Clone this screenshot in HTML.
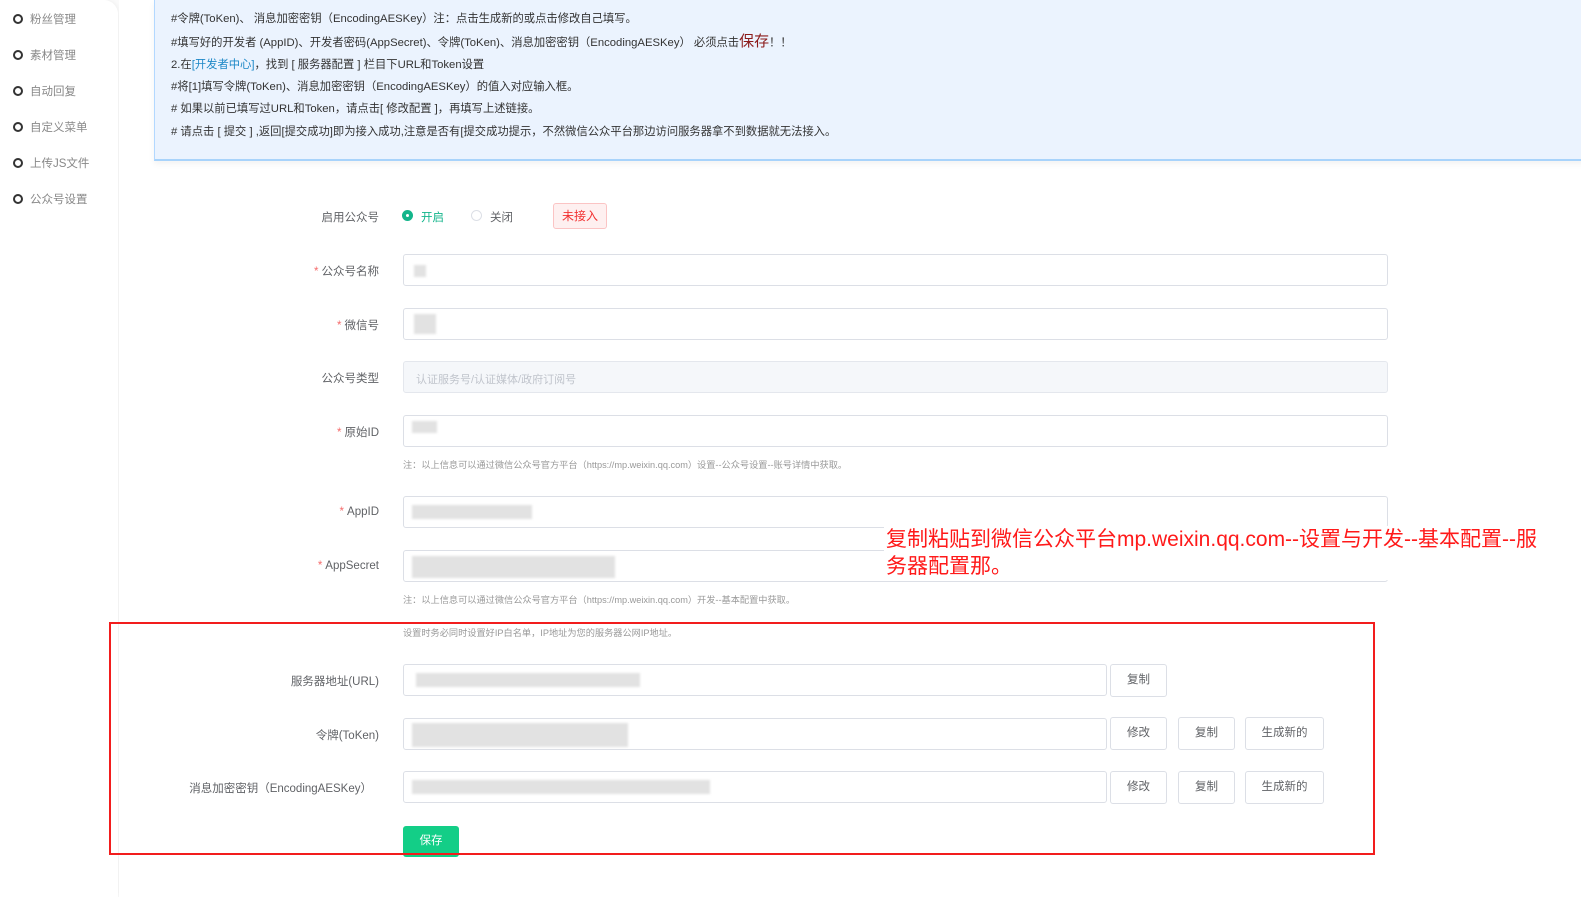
<!DOCTYPE html>
<html><head><meta charset="utf-8"><style>
*{margin:0;padding:0;box-sizing:border-box}
body{width:1581px;height:897px;background:#fafafa;font-family:"Liberation Sans","Noto Sans CJK SC",sans-serif;position:relative;overflow:hidden;color:#606266}
.a{position:absolute}
.side{left:0;top:0;width:118px;height:897px;background:#fff;border-radius:0 14px 0 0;box-shadow:1px 0 4px rgba(0,0,0,.05)}
.side div{position:absolute;left:13px;font-size:11.5px;color:#888;white-space:nowrap}
.side div b{display:inline-block;width:10px;height:10px;border:2px solid #333;border-radius:50%;margin-right:7px;vertical-align:-1px}
.main{left:119px;top:0;width:1463px;height:897px;background:#fff}
.note{left:154px;top:0;width:1440px;height:161px;background:#ebf3fe;border-left:1px solid #b3d8ff;border-bottom:2px solid #a8d3fb;box-shadow:0 3px 6px rgba(0,0,0,.05)}
.note p{position:absolute;left:16px;font-size:11.3px;line-height:16px;color:#333;white-space:nowrap}
.lab{font-size:11.5px;color:#606266;text-align:right;width:300px;white-space:nowrap}
.lab i{color:#f56c6c;font-style:normal;margin-right:3px}
.inp{left:403px;width:985px;height:32px;border:1px solid #dcdfe6;border-radius:3px;background:#fff}
.blur{position:absolute;background:#e2e2e2;filter:blur(1px)}
.hint{left:403px;font-size:9.2px;color:#999;white-space:nowrap}
.btn{height:33px;border:1px solid #dcdfe6;border-radius:3px;background:#fff;font-size:11.5px;color:#606266;text-align:center;line-height:31px}
</style></head><body>
<div class="a side">
<div style="top:11px"><b></b>粉丝管理</div>
<div style="top:47px"><b></b>素材管理</div>
<div style="top:83px"><b></b>自动回复</div>
<div style="top:119px"><b></b>自定义菜单</div>
<div style="top:155px"><b></b>上传JS文件</div>
<div style="top:191px"><b></b>公众号设置</div>
</div>
<div class="a main"></div>
<div class="a note">
<p style="top:11px">#令牌(ToKen)、 消息加密密钥（EncodingAESKey）注：点击生成新的或点击修改自己填写。</p>
<p style="top:34px">#填写好的开发者 (AppID)、开发者密码(AppSecret)、令牌(ToKen)、消息加密密钥（EncodingAESKey） 必须点击<span style="color:#8b1a1a;font-size:15px;line-height:16px">保存</span>！！</p>
<p style="top:57px">2.在<span style="color:#1e88c7">[开发者中心]</span>，找到 [ 服务器配置 ] 栏目下URL和Token设置</p>
<p style="top:79px">#将[1]填写令牌(ToKen)、消息加密密钥（EncodingAESKey）的值入对应输入框。</p>
<p style="top:101px"># 如果以前已填写过URL和Token，请点击[ 修改配置 ]，再填写上述链接。</p>
<p style="top:124px"># 请点击 [ 提交 ] ,返回[提交成功]即为接入成功,注意是否有[提交成功提示，不然微信公众平台那边访问服务器拿不到数据就无法接入。</p>
</div>

<div class="a lab" style="left:79px;top:209px">启用公众号</div>
<div class="a" style="left:402px;top:210px;width:11px;height:11px;border-radius:50%;background:#13b58b;"><div style="position:absolute;left:4px;top:4px;width:3px;height:3px;background:#fff;border-radius:50%"></div></div>
<div class="a" style="left:421px;top:209px;font-size:11.5px;color:#13b58b">开启</div>
<div class="a" style="left:471px;top:210px;width:11px;height:11px;border-radius:50%;border:1px solid #dcdfe6"></div>
<div class="a" style="left:490px;top:209px;font-size:11.5px;color:#606266">关闭</div>
<div class="a" style="left:553px;top:203px;width:54px;height:26px;background:#fef0f0;border:1px solid #fbc4c4;border-radius:3px;color:#f23030;font-size:12px;text-align:center;line-height:24px">未接入</div>

<div class="a lab" style="left:79px;top:263px"><i>*</i>公众号名称</div>
<div class="a inp" style="top:254px"><div class="blur" style="left:10px;top:10px;width:12px;height:12px"></div></div>
<div class="a lab" style="left:79px;top:317px"><i>*</i>微信号</div>
<div class="a inp" style="top:308px"><div class="blur" style="left:10px;top:5px;width:22px;height:20px"></div></div>
<div class="a lab" style="left:79px;top:370px">公众号类型</div>
<div class="a inp" style="top:361px;background:#f5f7fa;border-color:#e4e7ed;font-size:11px;color:#c0c4cc;padding:9px 0 0 12px">认证服务号/认证媒体/政府订阅号</div>
<div class="a lab" style="left:79px;top:424px"><i>*</i>原始ID</div>
<div class="a inp" style="top:415px"><div class="blur" style="left:8px;top:5px;width:25px;height:12px"></div></div>
<div class="a hint" style="top:457px">注：以上信息可以通过微信公众号官方平台（https://mp.weixin.qq.com）设置--公众号设置--账号详情中获取。</div>
<div class="a lab" style="left:79px;top:506px"><i>*</i>AppID</div>
<div class="a inp" style="top:496px"><div class="blur" style="left:8px;top:8px;width:120px;height:14px"></div></div>
<div class="a lab" style="left:79px;top:560px"><i>*</i>AppSecret</div>
<div class="a inp" style="top:550px"><div class="blur" style="left:8px;top:5px;width:203px;height:22px"></div></div>
<div class="a hint" style="top:592px">注：以上信息可以通过微信公众号官方平台（https://mp.weixin.qq.com）开发--基本配置中获取。</div>
<div class="a hint" style="top:625px">设置时务必同时设置好IP白名单，IP地址为您的服务器公网IP地址。</div>

<div class="a" style="left:884px;top:526px;background:#fff;color:#ff1a1a;font-size:21px;line-height:27px;width:690px;padding-left:2px;padding-right:28px">复制粘贴到微信公众平台mp.weixin.qq.com--设置与开发--基本配置--服务器配置那。</div>

<div class="a lab" style="left:79px;top:673px">服务器地址(URL)</div>
<div class="a inp" style="top:664px;width:704px"><div class="blur" style="left:12px;top:8px;width:224px;height:14px"></div></div>
<div class="a btn" style="left:1110px;top:664px;width:57px">复制</div>
<div class="a lab" style="left:79px;top:727px">令牌(ToKen)</div>
<div class="a inp" style="top:718px;width:704px"><div class="blur" style="left:8px;top:4px;width:216px;height:24px"></div></div>
<div class="a btn" style="left:1110px;top:717px;width:57px">修改</div>
<div class="a btn" style="left:1178px;top:717px;width:57px">复制</div>
<div class="a btn" style="left:1245px;top:717px;width:79px">生成新的</div>
<div class="a lab" style="left:72px;top:780px">消息加密密钥（EncodingAESKey）</div>
<div class="a inp" style="top:771px;width:704px"><div class="blur" style="left:8px;top:8px;width:298px;height:14px"></div></div>
<div class="a btn" style="left:1110px;top:771px;width:57px">修改</div>
<div class="a btn" style="left:1178px;top:771px;width:57px">复制</div>
<div class="a btn" style="left:1245px;top:771px;width:79px">生成新的</div>
<div class="a" style="left:403px;top:826px;width:56px;height:31px;background:#13ce87;border-radius:3px;color:#fff;font-size:11.5px;text-align:center;line-height:31px">保存</div>

<div class="a" style="left:109px;top:622px;width:1266px;height:233px;border:2px solid #f21d1d"></div>
</body></html>
